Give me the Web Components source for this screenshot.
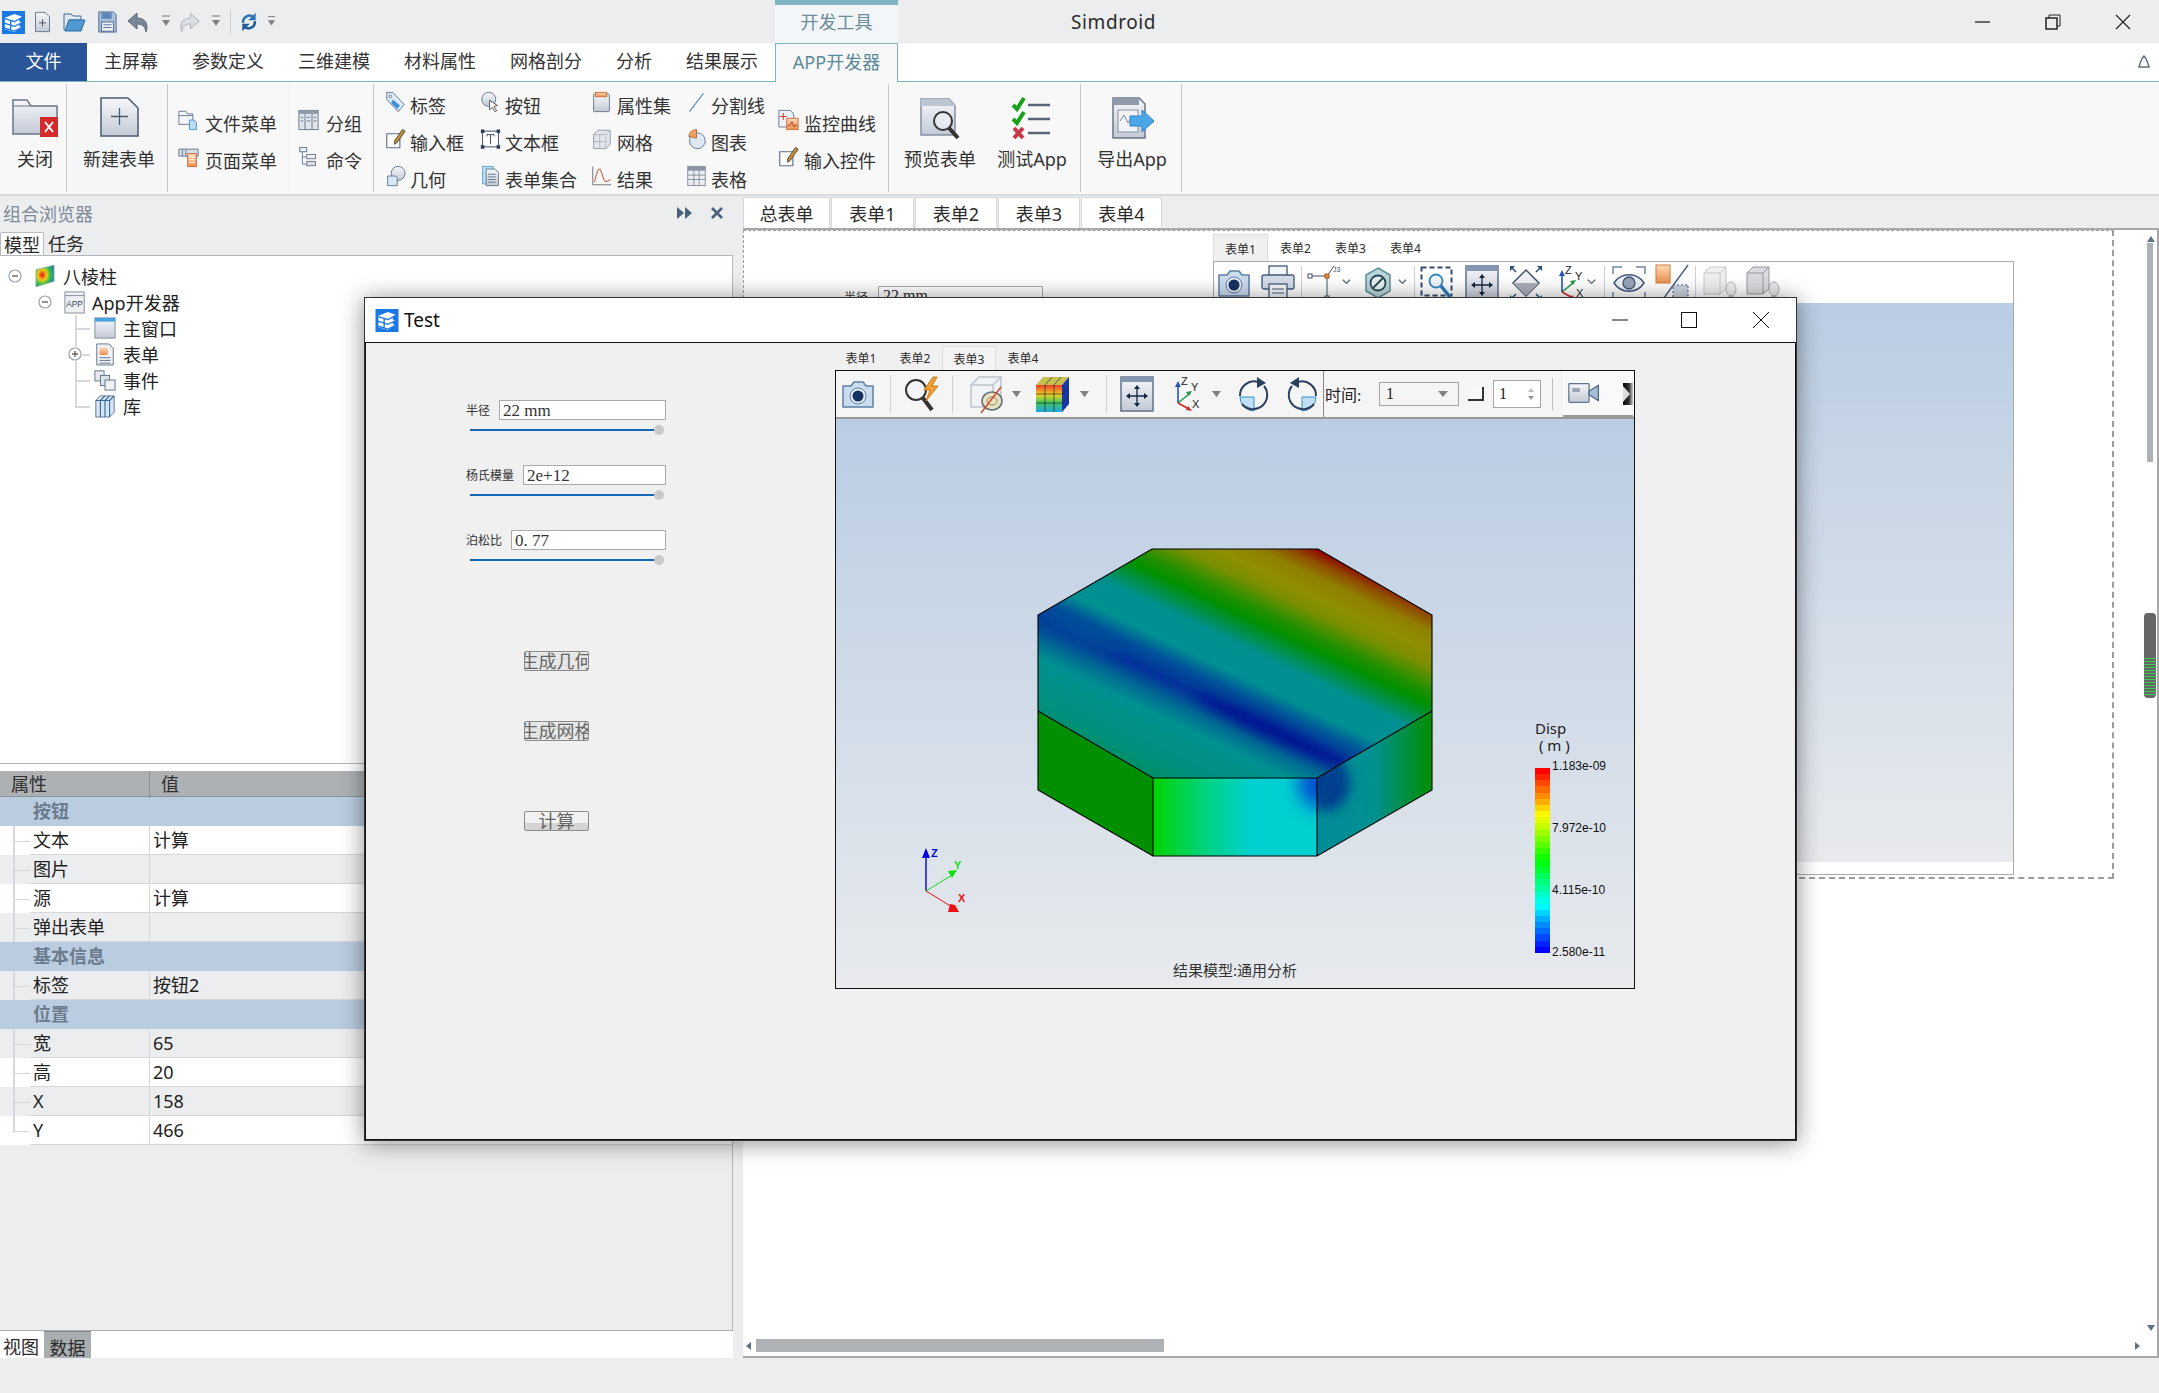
<!doctype html>
<html>
<head>
<meta charset="utf-8">
<title>Simdroid</title>
<style>
  html, body { margin: 0; background: #ecedef; overflow: hidden; }
  body { font-family: "Noto Sans", "Noto Sans CJK SC", sans-serif; font-size: 18px; color: #2b2b2b; }
</style>
</head>
<body>
<sim-app>
  <sim-titlebar>Simdroid</sim-titlebar>

  <ribbon-tabs>
    <rb-tab w="87" kind="file">文件</rb-tab>
    <rb-tab w="88">主屏幕</rb-tab>
    <rb-tab w="106">参数定义</rb-tab>
    <rb-tab w="106">三维建模</rb-tab>
    <rb-tab w="106">材料属性</rb-tab>
    <rb-tab w="106">网格剖分</rb-tab>
    <rb-tab w="70">分析</rb-tab>
    <rb-tab w="106">结果展示</rb-tab>
    <rb-tab w="123" kind="active">APP开发器</rb-tab>
  </ribbon-tabs>

  <sim-ribbon>
    <rb-group w="67"><rb-big icon="closeform" w="70" iw="46" ih="40">关闭</rb-big></rb-group>
    <rb-group w="101" pad="4"><rb-big icon="newform" w="96" iw="41" ih="40" shade="1">新建表单</rb-big></rb-group>
    <rb-group w="122" pad="10" soft="1">
      <rb-stack>
        <rb-small icon="filemenu" iw="27">文件菜单</rb-small>
        <rb-small icon="pagemenu" iw="27">页面菜单</rb-small>
      </rb-stack>
    </rb-group>
    <rb-group w="84" pad="8">
      <rb-stack>
        <rb-small icon="group" iw="28">分组</rb-small>
        <rb-small icon="cmd" iw="28">命令</rb-small>
      </rb-stack>
    </rb-group>
    <rb-group w="515" pad="11">
      <rb-grid>
        <rb-small icon="tag">标签</rb-small>
        <rb-small icon="click">按钮</rb-small>
        <rb-small icon="prop" iw="26">属性集</rb-small>
        <rb-small icon="line">分割线</rb-small>
        <rb-small icon="input">输入框</rb-small>
        <rb-small icon="textbox">文本框</rb-small>
        <rb-small icon="grid3d" iw="26">网格</rb-small>
        <rb-small icon="pie">图表</rb-small>
        <rb-small icon="geo">几何</rb-small>
        <rb-small icon="formset">表单集合</rb-small>
        <rb-small icon="curve" iw="26">结果</rb-small>
        <rb-small icon="table">表格</rb-small>
      </rb-grid>
      <rb-stack>
        <rb-small icon="monitor" iw="26">监控曲线</rb-small>
        <rb-small icon="input" iw="26">输入控件</rb-small>
      </rb-stack>
    </rb-group>
    <rb-group w="192">
      <rb-big icon="preview" w="102" iw="44" ih="42">预览表单</rb-big>
      <rb-big icon="test" w="82" iw="44" ih="42">测试App</rb-big>
    </rb-group>
    <rb-group w="101"><rb-big icon="export" w="102" iw="44" ih="42">导出App</rb-big></rb-group>
  </sim-ribbon>

  <sim-main>
    <side-panel slot="left">
      <tree-row slot="tree" indent="0" toggle="minus" icon="rainbow">八棱柱</tree-row>
      <tree-row slot="tree" indent="1" toggle="minus" icon="app">App开发器</tree-row>
      <tree-row slot="tree" indent="2" guide="mid" icon="window">主窗口</tree-row>
      <tree-row slot="tree" indent="2" guide="plus" toggle="plus" icon="form">表单</tree-row>
      <tree-row slot="tree" indent="2" guide="mid" icon="events">事件</tree-row>
      <tree-row slot="tree" indent="2" guide="end" icon="lib">库</tree-row>

      <prop-table slot="props">
        <prop-row kind="group">按钮</prop-row>
        <prop-row value="计算">文本</prop-row>
        <prop-row alt="1">图片</prop-row>
        <prop-row value="计算">源</prop-row>
        <prop-row alt="1" last="1">弹出表单</prop-row>
        <prop-row kind="group">基本信息</prop-row>
        <prop-row alt="1" value="按钮2" last="1" first="1">标签</prop-row>
        <prop-row kind="group">位置</prop-row>
        <prop-row alt="1" value="65">宽</prop-row>
        <prop-row value="20">高</prop-row>
        <prop-row alt="1" value="158">X</prop-row>
        <prop-row value="466" last="end">Y</prop-row>
      </prop-table>
    </side-panel>

    <form-area slot="right">
      <design-canvas>
        <tb-btn slot="tools" icon="camera" w="40" iw="34" ih="30"></tb-btn>
        <tb-btn slot="tools" icon="printer" w="47" iw="34" ih="36"></tb-btn>
        <tb-sep slot="tools" w="1"></tb-sep>
        <tb-btn slot="tools" icon="geomline" ml="5" w="32" iw="32" ih="38"></tb-btn>
        <tb-drop slot="tools" ml="2" kind="chev"></tb-drop>
        <tb-btn slot="tools" icon="hex" ml="10" w="32" iw="28" ih="32"></tb-btn>
        <tb-drop slot="tools" ml="3" kind="chev"></tb-drop>
        <tb-sep slot="tools" ml="6" w="1"></tb-sep>
        <tb-btn slot="tools" icon="dashmag" ml="4" w="36" iw="34" ih="34"></tb-btn>
        <tb-btn slot="tools" icon="pan" ml="8" w="38" iw="34" ih="36"></tb-btn>
        <tb-btn slot="tools" icon="diamond" ml="7" w="36" iw="34" ih="36"></tb-btn>
        <tb-btn slot="tools" icon="axes" ml="11" w="30" iw="30" ih="36"></tb-btn>
        <tb-drop slot="tools" ml="1" kind="chev"></tb-drop>
        <tb-sep slot="tools" ml="7" w="1"></tb-sep>
        <tb-btn slot="tools" icon="eye" ml="6" w="36" iw="34" ih="34"></tb-btn>
        <tb-btn slot="tools" icon="split" ml="7" w="36" iw="34" ih="38"></tb-btn>
        <tb-sep slot="tools" ml="5" w="1"></tb-sep>
        <tb-btn slot="tools" icon="cubebulb" ml="6" w="36" iw="34" ih="36"></tb-btn>
        <tb-btn slot="tools" icon="cubebulb2" ml="7" w="36" iw="34" ih="36"></tb-btn>
      </design-canvas>
    </form-area>
  </sim-main>

  <sim-status></sim-status>

  <test-window>
    <form-field label="半径" value="22&nbsp;mm"></form-field>
    <form-field label="杨氏模量" value="2e+12"></form-field>
    <form-field label="泊松比" value="0.&nbsp;77"></form-field>
    <form-button top="56">生成几何</form-button>
    <form-button top="50">生成网格</form-button>
    <form-button top="70" plain="1">计算</form-button>

    <viewer-3d slot="viewer">
      <tb-btn slot="tools" icon="camera" w="44" iw="34" ih="30"></tb-btn>
      <tb-sep slot="tools" ml="10" w="1" mr="10"></tb-sep>
      <tb-btn slot="tools" icon="boltmag" w="41" iw="38" ih="36"></tb-btn>
      <tb-sep slot="tools" ml="10" w="1" mr="10"></tb-sep>
      <tb-btn slot="tools" icon="cubeclip" w="48" iw="36" ih="38"></tb-btn>
      <tb-drop slot="tools"></tb-drop>
      <tb-btn slot="tools" icon="colorcube" ml="8" w="44" iw="34" ih="36"></tb-btn>
      <tb-drop slot="tools" ml="5"></tb-drop>
      <tb-sep slot="tools" ml="16" w="1" mr="9"></tb-sep>
      <tb-btn slot="tools" icon="pan" ml="6" w="30" iw="34" ih="36"></tb-btn>
      <tb-btn slot="tools" icon="axes" ml="14" w="40" iw="30" ih="36"></tb-btn>
      <tb-drop slot="tools" ml="5"></tb-drop>
      <tb-btn slot="tools" icon="rotcw" ml="10" w="44" iw="34" ih="36"></tb-btn>
      <tb-btn slot="tools" icon="rotccw" ml="5" w="42" iw="34" ih="36"></tb-btn>
      <time-controls slot="tools"></time-controls>
    </viewer-3d>
  </test-window>
</sim-app>

<script>
// outline colours shared by the ribbon icons
const OL = '#5d6f88';
const DEFS = `<defs>
  <linearGradient id="g" x1="0" y1="0" x2="0" y2="1"><stop offset="0" stop-color="#f6f7fa"/><stop offset="1" stop-color="#c3cad6"/></linearGradient>
  <linearGradient id="o" x1="0" y1="0" x2="0" y2="1"><stop offset="0" stop-color="#fbd9b5"/><stop offset="1" stop-color="#ee8f4e"/></linearGradient>
  <radialGradient id="rb" cx=".35" cy=".45" r=".8"><stop offset="0" stop-color="#e01818"/><stop offset=".3" stop-color="#f4c814"/><stop offset=".55" stop-color="#2fc04a"/><stop offset="1" stop-color="#1858d8"/></radialGradient>
  <linearGradient id="cc" x1="0" y1="0" x2="0" y2="1"><stop offset="0" stop-color="#e83a2a"/><stop offset=".35" stop-color="#f4d020"/><stop offset=".65" stop-color="#40c860"/><stop offset="1" stop-color="#20a8e0"/></linearGradient>
</defs>`;

// name: [viewBox width, viewBox height, markup]
const ICONS = {
  logo: [24, 24, `<rect width="24" height="24" fill="#1a78e6"/><path fill="#fff" d="M3 7 13 3l8 3-3 2v3l3 1-3 2v2l3 1-8 5-10-3v-5l2-1-2-1v-5z"/><path fill="none" stroke="#1a78e6" stroke-width="1.4" d="M3 8l10 3 8-4M3 13l10 3 8-4M3 18l10 3 8-4M9 10v9"/>`],
  new: [24, 24, `<path d="M4 1h11l5 5v17H4z" fill="url(#g)" stroke="${OL}"/><path d="M12 9v8M8 13h8" stroke="#445" fill="none"/>`],
  open: [24, 24, `<path d="M2 4h7l2 2h8v4H7L4 20H2z" fill="#dfe8f2" stroke="#3a6a98"/><path d="M7 10h16l-4 11H3z" fill="#4f9ad6" stroke="#2f6a9c"/>`],
  save: [24, 24, `<path d="M3 1h16l3 3v19H3z" fill="#a9c0dc" stroke="#4d6a90"/><rect x="6" y="1.500" width="11" height="7" fill="#5f88b8"/><rect x="6" y="12" width="13" height="10" fill="#eef2f7" stroke="#4d6a90"/><path d="M8 15h9M8 18h9" stroke="#4d6a90"/>`],
  undo: [24, 24, `<path d="M11 3 2 11l9 8v-5c5 0 8 2 9 8 3-8-1-14-9-14z" fill="#7b8796" stroke="#5c6776"/>`],
  redo: [24, 24, `<path d="M13 3l9 8-9 8v-5c-5 0-8 2-9 8-3-8 1-14 9-14z" fill="#dcdfe4" stroke="#a8aeb7"/>`],
  sync: [24, 24, `<path d="M5 13a7.500 7.500 0 0 1 12-7" fill="none" stroke="#2a73b8" stroke-width="3"/><path d="M20 1v9h-9z" fill="#2a73b8"/><path d="M19 11a7.500 7.500 0 0 1-12 7" fill="none" stroke="#1d5c98" stroke-width="3"/><path d="M4 23v-9h9z" fill="#1d5c98"/>`],
  qdrop: [10, 14, `<path d="M1 1h8" stroke="#777"/><path d="M1 5h8l-4 6z" fill="#808080"/>`],
  tri: [12, 10, `<path d="M1 1h10L6 8z" fill="#808080"/>`],
  chev: [12, 10, `<path d="M2 2l4 4 4-4" fill="none" stroke="#5f6b78" stroke-width="1.400"/>`],

  closeform: [46, 40, `<path d="M1 3h14l4 6h26v28H1z" fill="url(#g)" stroke="#6b7686" stroke-width="1.500"/><path d="M1 9h18" stroke="#6b7686"/><rect x="28" y="20" width="18" height="20" fill="#d42a2a"/><path d="M33 25l8 10M41 25l-8 10" stroke="#fff" stroke-width="2"/>`],
  newform: [41, 40, `<path d="M2 1h27l10 10v28H2z" fill="url(#g)" stroke="#4a5a72" stroke-width="1.500"/><path d="M20.500 11v17M12 19.500h17" stroke="#4a5a72" stroke-width="1.300"/>`],
  filemenu: [24, 24, `<path d="M1 2h8l2 3h6v12H1z" fill="#f4f6f9" stroke="${OL}"/><path d="M1 7h16" stroke="${OL}"/><path d="M13 12h5l3 3v8h-8z" fill="#bcdcf4" stroke="#3f8fcb"/>`],
  pagemenu: [24, 24, `<path d="M1 3h22v8H1z" fill="#d8dde5" stroke="${OL}"/><path d="M5 3v8M9 3v8" stroke="${OL}"/><rect x="11" y="8" width="10" height="15" fill="url(#o)" stroke="#c96a34"/><path d="M13 12h6M13 15h6M13 18h6" stroke="#fff"/>`],
  group: [24, 24, `<rect x="1" y="1" width="22" height="22" fill="#dfe3ea" stroke="${OL}"/><rect x="1" y="1" width="22" height="4" fill="#8f9aaa"/><path d="M8 5v18M16 5v18M3 9h3M3 13h3M10 9h4M10 13h4M18 9h3M18 13h3" stroke="${OL}"/>`],
  cmd: [24, 24, `<path d="M5 5v15h5M5 12h5" fill="none" stroke="${OL}"/><rect x="2" y="1" width="8" height="5" fill="#eef0f4" stroke="${OL}"/><rect x="10" y="9" width="10" height="5" fill="#eef0f4" stroke="${OL}"/><rect x="10" y="17" width="10" height="5" fill="#d9dde4" stroke="${OL}"/>`],
  tag: [24, 24, `<path d="M2 1h7l13 14-7 8L2 9z" fill="#dcebf8" stroke="${OL}"/><path d="M9 9l8 7-3 4-7-7z" fill="#3d8fdc"/><circle cx="6" cy="5.500" r="1.500" fill="#fff" stroke="${OL}"/>`],
  click: [24, 24, `<circle cx="10" cy="9" r="8" fill="url(#g)" stroke="${OL}"/><path d="M11 10l9 6-4 1 3 5-2 1-3-5-3 3z" fill="#fff" stroke="#444"/>`],
  input: [24, 24, `<path d="M2 6h15v16H2z" fill="#fff" stroke="${OL}" stroke-width="1.300"/><path d="M20 1l3 2-9 13-3 2 0-4z" fill="#c98d2e" stroke="#444"/>`],
  textbox: [24, 24, `<rect x="3" y="3" width="18" height="18" fill="#fff" stroke="#2b3a55"/><path d="M1 1h4v4H1zM19 1h4v4h-4zM1 19h4v4H1zM19 19h4v4h-4z" fill="#2b3a55"/><path d="M8 7h8M12 7v11M8 7v2M16 7v2" stroke="#2b3a55" fill="none"/>`],
  geo: [24, 24, `<circle cx="15" cy="9" r="8" fill="url(#g)" stroke="${OL}"/><path d="M3 12h9l2 2v9H3z" fill="#d6e8f6" stroke="${OL}"/>`],
  prop: [24, 24, `<rect x="3" y="3" width="18" height="20" rx="1" fill="url(#g)" stroke="${OL}"/><rect x="5" y="1" width="13" height="5" fill="url(#o)" stroke="#c96a34"/>`],
  line: [24, 24, `<path d="M4 23 20 2" stroke="#4a86c8" stroke-width="1.300"/>`],
  grid3d: [24, 24, `<path d="M3 7 8 2h14v16l-5 5H3z" fill="#e2e6ec" stroke="#8a93a0"/><path d="M3 7h14v16M17 7l5-5M3 15h14M10 7v16" stroke="#aeb5bf" fill="none"/>`],
  pie: [24, 24, `<circle cx="13" cy="14" r="9" fill="#dde8f3" stroke="${OL}"/><path d="M12 11V1A10 10 0 0 0 3 9z" fill="#f0a060" stroke="#b0683a"/>`],
  formset: [24, 24, `<path d="M3 1h12v20H3z" fill="#bfe0f6" stroke="#4e9bd0"/><path d="M7 4h10l4 4v15H7z" fill="url(#g)" stroke="${OL}"/><path d="M9 10h9M9 13h9M9 16h9M9 19h9" stroke="${OL}"/>`],
  curve: [24, 24, `<path d="M2 1v21h21" fill="none" stroke="#667"/><path d="M4 19C8 1 10 1 13 11s5 8 9 5" fill="none" stroke="#d25a44" stroke-width="1.200"/>`],
  table: [24, 24, `<rect x="2" y="1" width="20" height="22" fill="#eceff3" stroke="#7e8896"/><rect x="2" y="1" width="20" height="5" fill="#8b95a5"/><path d="M2 11h20M2 16h20M9 6v17M15 6v17" stroke="#7e8896"/>`],
  monitor: [24, 24, `<path d="M1 1h13l4 4v15H1z" fill="#eef1f6" stroke="${OL}"/><path d="M6 4v8M2 8h8" stroke="#c03a2a" stroke-width="1.100"/><rect x="10" y="10" width="13" height="13" fill="url(#o)" stroke="#c96a34"/><path d="M11 18h3l2-4 2 6 1-2h3" fill="none" stroke="#b0331e"/>`],
  preview: [44, 42, `<path d="M3 2h28l6 7v29H3z" fill="url(#g)" stroke="#8390a3" stroke-width="1.500"/><path d="M3 2h28l6 7H3z" fill="#bcc5d2"/><circle cx="25" cy="24" r="9" fill="#eef1f6" fill-opacity=".7" stroke="#333" stroke-width="2"/><path d="M31 31l9 10" stroke="#333" stroke-width="4"/>`],
  test: [44, 42, `<path d="M3 8l4 4 7-11" fill="none" stroke="#1aa01a" stroke-width="4"/><path d="M3 22l4 4 7-11" fill="none" stroke="#1aa01a" stroke-width="4"/><path d="M4 31l9 10M13 31l-9 10" stroke="#c83a4a" stroke-width="4"/><path d="M18 8h22M18 22h22M18 36h22" stroke="#566578" stroke-width="2.500"/>`],
  export: [44, 42, `<path d="M3 1h26l6 6v34H3z" fill="url(#g)" stroke="#6b7686" stroke-width="1.500"/><path d="M3 1h26v7H3z" fill="#8f9aaa"/><rect x="8" y="13" width="20" height="22" fill="#f2f4f7" stroke="#8390a3"/><path d="M10 24l4-6 4 8 4-6 4 3" fill="none" stroke="#7e8896"/><path d="M20 19h12v-6l12 11-12 11v-6H20z" fill="#4aa8e8" stroke="#2f87c6"/>`],
  rainbow: [24, 24, `<path d="M2 5 22 0v18L2 24z" fill="url(#rb)" stroke="#b8bec8"/>`],
  app: [24, 24, `<rect x="1" y="1" width="21" height="23" fill="#eef0f4" stroke="#7e8896"/><path d="M1 5h21" stroke="#7e8896"/><text x="11.500" y="17" text-anchor="middle" font-size="9" fill="#3c4c66" font-family="Liberation Sans">APP</text>`],
  window: [24, 24, `<rect x="1" y="1" width="22" height="22" fill="url(#g)" stroke="#7e8896"/><rect x="1" y="1" width="22" height="4" fill="#45a4e0"/>`],
  form: [24, 24, `<path d="M3 1h13l5 5v18H3z" fill="#eef1f6" stroke="${OL}"/><rect x="6" y="5" width="9" height="8" fill="url(#o)"/><path d="M6 16h12M6 19h12M6 22h12" stroke="${OL}"/>`],
  events: [24, 24, `<rect x="1" y="2" width="10" height="11" fill="#e6e9ee" stroke="${OL}"/><rect x="7" y="7" width="10" height="11" fill="#dfe3ea" stroke="${OL}"/><rect x="12" y="12" width="11" height="11" fill="#eef0f4" stroke="${OL}"/>`],
  lib: [24, 24, `<path d="M2 6l5-5h15v18l-5 5H2z" fill="#d7e6f5" stroke="${OL}"/><path d="M7 6v18M12 6v18M2 6h15v18M17 6l5-5M12 6l5-5M7 6l5-5" stroke="#33689c" fill="none" stroke-width="1.200"/>`],
  camera: [34, 30, `<path d="M2 7h8l3-4h9l3 4h7v21H2z" fill="#cbdcee" stroke="#5f7fa6" stroke-width="1.500" stroke-linejoin="round"/><circle cx="17" cy="17" r="8" fill="#e8eef5" stroke="#5f7fa6"/><circle cx="17" cy="17" r="5.500" fill="#16315f"/>`],
  printer: [34, 36, `<rect x="8" y="1" width="18" height="10" fill="#f4f6f9" stroke="#41597c" stroke-width="1.300"/><rect x="1" y="10" width="32" height="14" rx="2" fill="#d5dde8" stroke="#41597c" stroke-width="1.300"/><rect x="8" y="19" width="18" height="15" fill="#f4f6f9" stroke="#41597c" stroke-width="1.300"/><path d="M11 24h12M11 28h12" stroke="#41597c"/>`],
  geomline: [32, 38, `<path d="M4 12h16M20 12v22M20 12l7-10" stroke="#44526a" fill="none"/><rect x="1" y="10" width="4" height="4" fill="#fff" stroke="#44526a"/><rect x="18" y="10" width="4" height="4" fill="#e88a3c" stroke="#a65a20"/><rect x="18" y="32" width="4" height="4" fill="#fff" stroke="#44526a"/><text x="26" y="8" font-size="7" fill="#44526a" font-family="Liberation Sans">J3</text>`],
  hex: [28, 32, `<path d="M14 1l12 7v16l-12 7-12-7V8z" fill="#bcd6da" stroke="#5f8f98" stroke-width="1.500"/><circle cx="14" cy="16" r="7.500" fill="#e8f0f2" stroke="#244a58" stroke-width="1.800"/><path d="M9 21 19 11" stroke="#244a58" stroke-width="1.800"/>`],
  dashmag: [34, 34, `<rect x="1.500" y="1.500" width="30" height="28" fill="none" stroke="#3a4a70" stroke-width="2" stroke-dasharray="5 3"/><circle cx="16" cy="15" r="6.500" fill="#f2f6fa" stroke="#3a8cc8" stroke-width="2"/><path d="M21 20l9 11" stroke="#2a78b8" stroke-width="3.500"/>`],
  pan: [34, 36, `<rect x="1" y="1" width="32" height="34" fill="url(#g)" stroke="#60718c" stroke-width="1.500"/><rect x="1" y="1" width="32" height="5" fill="#8496b0"/><path d="M17 11v18M8 20h18" stroke="#12263f" stroke-width="1.300"/><path d="M17 9l-3 4h6zM17 31l-3-4h6zM6 20l4-3v6zM28 20l-4-3v6z" fill="#12263f"/>`],
  diamond: [34, 36, `<path d="M17 5 30 18 17 31 4 18z" fill="#f0f2f5" stroke="#44526a" stroke-width="1.500"/><path d="M4 18h26L17 31z" fill="#a9b0ba"/><path d="M2 2l5 5M32 2l-5 5M2 34l5-5M32 34l-5-5" stroke="#2d4f78" stroke-width="1.500"/><path d="M1 1h5L1 6zM33 1h-5l5 5zM1 35h5l-5-5zM33 35h-5l5-5z" fill="#2d4f78"/>`],
  axes: [30, 36, `<path d="M7 27V9" stroke="#2455b0" stroke-width="1.600"/><path d="M7 5l-3 6h6z" fill="#2455b0"/><path d="M7 27l11-9" stroke="#1f9a4a" stroke-width="1.600"/><path d="M21 15l-6 1 3 4z" fill="#1f9a4a"/><path d="M7 27l11 6" stroke="#d02a2a" stroke-width="1.600"/><path d="M21 35l-6-1 2-4z" fill="#d02a2a"/><text x="10" y="9" font-size="11" fill="#222" font-family="Liberation Sans">Z</text><text x="20" y="15" font-size="11" fill="#222" font-family="Liberation Sans">Y</text><text x="21" y="32" font-size="11" fill="#222" font-family="Liberation Sans">X</text>`],
  eye: [34, 34, `<path d="M1 8V1h9M24 1h9v7M1 26v7h9M24 33h9v-7" fill="none" stroke="#6f86a4" stroke-width="1.500"/><path d="M2 17C9 6 25 6 32 17 25 28 9 28 2 17z" fill="#eef2f6" stroke="#41597c" stroke-width="1.500"/><circle cx="17" cy="17" r="6" fill="#9aa6b6" stroke="#41597c" stroke-width="1.300"/>`],
  split: [34, 38, `<rect x="1" y="1" width="14" height="18" fill="url(#o)" stroke="#d07a3c"/><path d="M33 1 6 38" stroke="#41597c" stroke-width="1.300"/><rect x="18" y="21" width="15" height="15" fill="#ccd4de" stroke="#41597c" stroke-dasharray="2 2"/>`],
  cubebulb: [34, 36, `<path d="M1 8l6-6h16v22l-6 5H1z" fill="#eff0f2" stroke="#c6c9ce"/><path d="M1 8h16v21M17 8l6-6" fill="none" stroke="#c6c9ce"/><ellipse cx="28" cy="24" rx="5" ry="7" fill="#eceeef" stroke="#b0b4ba"/><path d="M26 31h4v4h-4z" fill="#ccc" stroke="#b0b4ba"/>`],
  cubebulb2: [34, 36, `<path d="M1 8l6-6h16v22l-6 5H1z" fill="#d9dbde" stroke="#96999e"/><path d="M1 8h16v21M17 8l6-6" fill="none" stroke="#96999e"/><ellipse cx="28" cy="24" rx="5" ry="7" fill="#e6e8ea" stroke="#a8acb2"/><path d="M26 31h4v4h-4z" fill="#ccc" stroke="#a8acb2"/>`],
  boltmag: [38, 36, `<circle cx="13" cy="14" r="10" fill="#f2f4f7" stroke="#333" stroke-width="2"/><path d="M20 22l9 12" stroke="#333" stroke-width="4"/><path d="M30 1 21 14h6l-4 11 12-15h-6l5-9z" fill="#f0a030" stroke="#c87a18"/>`],
  cubeclip: [36, 38, `<path d="M2 10l8-8h22v22l-8 8H2z" fill="#f0f2f5" stroke="#bcc4d0" stroke-width="1.500"/><path d="M2 10h22v22M24 10l8-8" fill="none" stroke="#bcc4d0" stroke-width="1.500"/><ellipse cx="23" cy="26" rx="10" ry="9" fill="#e8e2c0" stroke="#5f6b78" stroke-width="1.500"/><ellipse cx="23" cy="26" rx="5" ry="4" fill="none" stroke="#8a8a60"/><path d="M12 38 32 12" stroke="#d8482a" stroke-width="1.500"/>`],
  colorcube: [34, 36, `<path d="M8 1h26l-7 8H1z" fill="#c8c050"/><path d="M1 9h26v27H1z" fill="url(#cc)"/><path d="M27 9l7-8v27l-7 8z" fill="#1838a8"/><path d="M1 18h26M1 27h26M10 9v27M19 9v27M10 9l7-8M19 9l7-8M27 18l7-8M27 27l7-8" stroke="#2a2a2a" stroke-width=".7" fill="none"/>`],
  rotcw: [34, 36, `<path d="M17 21H3a14 14 0 0 0 14 14z" fill="#bfe0f6" stroke="#3a8cc8"/><path d="M27 10A14 14 0 1 1 5 28" fill="none" stroke="#29405f" stroke-width="2"/><path d="M3 20A14 14 0 0 1 21 6" fill="none" stroke="#29405f" stroke-width="2"/><path d="M20 1l9 6-9 5z" fill="#29405f"/>`],
  rotccw: [34, 36, `<path d="M17 21h14a14 14 0 0 1-14 14z" fill="#bfe0f6" stroke="#3a8cc8"/><path d="M7 10A14 14 0 1 0 29 28" fill="none" stroke="#29405f" stroke-width="2"/><path d="M31 20A14 14 0 0 0 13 6" fill="none" stroke="#29405f" stroke-width="2"/><path d="M14 1 5 7l9 5z" fill="#29405f"/>`],
  video: [38, 28, `<rect x="1" y="3" width="24" height="22" rx="1" fill="url(#g)" stroke="#5f7590" stroke-width="1.500"/><rect x="5" y="8" width="9" height="5" fill="#9aa6b6"/><path d="M25 12l11-7v18l-11-7z" fill="#a7c0d8" stroke="#4a6584" stroke-width="1.500"/>`],
};

class SimEl extends HTMLElement {
  connectedCallback() {
    if (this.shadowRoot) return;
    this.attachShadow({ mode: 'open' });
    this.shadowRoot.innerHTML = `<style>${this.css()}</style>${this.html()}`;
  }
  attr(name, fallback) {
    const v = this.getAttribute(name);
    return v === null ? fallback : v;
  }
  css() { return ':host{display:block}'; }
  html() { return '<slot></slot>'; }
}

class SimIcon extends SimEl {
  css() { return ':host{display:inline-flex;flex:none} svg{display:block;overflow:visible}'; }
  html() {
    const ic = ICONS[this.attr('name')];
    return `<svg width="${this.attr('w', ic[0])}" height="${this.attr('h', ic[1])}" viewBox="0 0 ${ic[0]} ${ic[1]}">${DEFS}${ic[2]}</svg>`;
  }
}

class SimApp extends SimEl {
  css() {
    return `:host{display:grid;position:relative;width:2159px;height:1393px;overflow:hidden;
      grid-template-rows:43px 39px 114px 1162px 35px;background:#ecedef}`;
  }
}

class SimTitlebar extends SimEl {
  css() {
    return `:host{display:grid;grid-template-columns:775px 123px 1fr auto;background:#ecedef;height:43px}
      .qat{display:flex;align-items:center;padding-left:2px}
      .ctx{background:#f3f6f8;border-top:5px solid #7fb5c2;color:#6d8d99;text-align:center;line-height:34px}
      .title{padding-left:173px;line-height:44px;font-size:19px;letter-spacing:.6px;color:#2a2a2a}
      .win{display:flex;align-items:center;padding-right:26px;gap:50px}
      .div{width:1px;height:24px;background:#c9ccd0;margin-left:9px;margin-right:8px}`;
  }
  html() {
    return `<div class="qat">
        <sim-icon name="logo" w="23" h="23"></sim-icon>
        <sim-icon name="new" style="margin-left:7px" w="21" h="24"></sim-icon>
        <sim-icon name="open" style="margin-left:9px" w="24" h="24"></sim-icon>
        <sim-icon name="save" style="margin-left:10px" w="22" h="24"></sim-icon>
        <sim-icon name="undo" style="margin-left:8px" w="24" h="24"></sim-icon>
        <sim-icon name="qdrop" style="margin-left:11px" w="10" h="14"></sim-icon>
        <sim-icon name="redo" style="margin-left:7px" w="23" h="24"></sim-icon>
        <sim-icon name="qdrop" style="margin-left:10px" w="10" h="14"></sim-icon>
        <span class="div"></span>
        <sim-icon name="sync" w="20" h="24"></sim-icon>
        <sim-icon name="qdrop" style="margin-left:8px" w="9" h="14"></sim-icon>
      </div>
      <div class="ctx">开发工具</div>
      <div class="title"><slot></slot></div>
      <div class="win">
        <svg width="20" height="20" viewBox="0 0 20 20"><path d="M2 10h15" stroke="#222" stroke-width="1.300"/></svg>
        <svg width="20" height="20" viewBox="0 0 20 20"><path d="M3 6h11v11H3z" fill="none" stroke="#222" stroke-width="1.500"/><path d="M6 6V3h11v11h-3" fill="none" stroke="#222"/></svg>
        <svg width="20" height="20" viewBox="0 0 20 20"><path d="M3 3l14 14M17 3 3 17" stroke="#222" stroke-width="1.200"/></svg>
      </div>`;
  }
}

class RibbonTabs extends SimEl {
  css() {
    return `:host{display:flex;position:relative;height:39px;background:#fff;box-sizing:border-box;border-bottom:1px solid #7db4c0}
      .collapse{margin-left:auto;margin-right:9px;align-self:center}`;
  }
  html() {
    return `<slot></slot><svg class="collapse" width="12" height="14" viewBox="0 0 12 14"><path d="M6 1C3 4 2 9 1 12h10C10 9 9 4 6 1z" fill="none" stroke="#66727e" stroke-width="1.500"/></svg>`;
  }
}

class RbTab extends SimEl {
  css() {
    const k = this.attr('kind', '');
    const base = `:host{display:block;width:${this.attr('w')}px;height:38px;line-height:36px;text-align:center;box-sizing:border-box;flex:none;`;
    if (k === 'file') return base + 'background:#2a5599;color:#fff}';
    if (k === 'active') return base + 'height:39px;background:#f8f8f8;color:#5b8a98;border:1px solid #7db4c0;border-bottom:none;position:relative;z-index:1;margin-top:0}';
    return base + 'color:#333}';
  }
}

class SimRibbon extends SimEl {
  css() {
    return ':host{display:flex;height:114px;background:#f8f8f8;box-sizing:border-box;border-bottom:2px solid #d9dadc;padding-bottom:2px}';
  }
}

class RbGroup extends SimEl {
  css() {
    const line = this.attr('soft') ? '#ededed' : '#c4c7ca';
    return `:host{display:flex;flex:none;box-sizing:border-box;width:${this.attr('w')}px;padding-left:${this.attr('pad', 0)}px;
      border-right:1px solid ${line};height:108px;margin-top:2px}`;
  }
}

class RbBig extends SimEl {
  css() {
    const shade = this.attr('shade') ? 'background:#f5f6f8;' : '';
    return `:host{display:flex;flex-direction:column;align-items:center;flex:none;width:${this.attr('w')}px;${shade}padding-top:13px;box-sizing:border-box;color:#333}
      .ic{height:42px}
      .lbl{margin-top:8px;line-height:24px;white-space:nowrap}`;
  }
  html() {
    return `<div class="ic"><sim-icon name="${this.attr('icon')}" w="${this.attr('iw')}" h="${this.attr('ih')}"></sim-icon></div><div class="lbl"><slot></slot></div>`;
  }
}

class RbStack extends SimEl {
  css() { return ':host{display:flex;flex-direction:column;padding-top:20px}'; }
}

class RbGrid extends SimEl {
  css() {
    return `:host{display:grid;grid-template-columns:95px 111px 95px 92px;grid-auto-rows:37px;padding-top:2px}`;
  }
}

class RbSmall extends SimEl {
  css() {
    return `:host{display:flex;align-items:center;height:37px;white-space:nowrap;color:#333}
      .ic{width:${this.attr('iw', 25)}px;flex:none}`;
  }
  html() {
    return `<span class="ic"><sim-icon name="${this.attr('icon')}" w="21" h="22"></sim-icon></span><slot></slot>`;
  }
}

class SimMain extends SimEl {
  css() { return ':host{display:grid;grid-template-columns:743px 1fr;height:1162px}'; }
  html() { return '<slot name="left"></slot><slot name="right"></slot>'; }
}

class SidePanel extends SimEl {
  css() {
    return `:host{display:flex;flex-direction:column;width:743px;height:1162px;background:#ecedef}
      .hd{display:flex;align-items:center;height:36px;box-sizing:border-box;padding-bottom:2px;color:#7d8b9a;padding-left:3px;flex:none}
      .hd svg:first-of-type{margin-left:auto}
      .tabs{display:flex;height:23px;flex:none;margin-right:10px}
      .tab{padding:0 4px;line-height:24px}
      .tab.on{background:#fff;border:1px solid #b8bcc0;border-bottom:none;border-radius:2px 2px 0 0;padding:0 3px}
      .tree{width:733px;box-sizing:border-box;height:509px;background:#fff;border:1px solid #b4b7ba;border-left:none;padding-top:7px;flex:none}
      .gap{width:733px;height:7px;background:#fff;flex:none}
      .pane{width:733px;box-sizing:border-box;flex:1;background:#ecedef;border-right:1px solid #b4b7ba;border-bottom:1px solid #a8acb0}
      .foot{display:flex;width:733px;height:27px;background:#fff;flex:none;box-sizing:border-box;padding-left:3px;line-height:32px;overflow:hidden}
      .foot span{width:38px}
      .foot .sel{background:#a9aeb1;width:47px;text-align:center;margin-left:3px;border-top:1px solid #888}`;
  }
  html() {
    return `<div class="hd">组合浏览器
        <svg width="18" height="16" viewBox="0 0 18 16"><path d="M1 2l7 6-7 6zM9 2l7 6-7 6z" fill="#4a6078"/></svg>
        <svg style="margin-left:16px;margin-right:19px" width="14" height="14" viewBox="0 0 14 14"><path d="M2 2l10 10M12 2 2 12" stroke="#4a6078" stroke-width="2.600"/></svg>
      </div>
      <div class="tabs"><div class="tab on">模型</div><div class="tab">任务</div></div>
      <div class="tree"><slot name="tree"></slot></div>
      <div class="gap"></div>
      <div class="pane"><slot name="props"></slot></div>
      <div class="foot"><span>视图</span><span class="sel">数据</span></div>`;
  }
}

class TreeRow extends SimEl {
  css() {
    const level = +this.attr('indent', 0);
    const g = this.attr('guide');
    const x = [34, 64, 94][level];
    let guides = '';
    if (g) {
      const h = g === 'end' ? '50%' : '100%';
      guides = `.v{position:absolute;left:75px;top:0;height:${h};width:2px;background:#d5d8dc}
        .h{position:absolute;left:75px;top:50%;width:15px;height:2px;background:#d5d8dc}`;
    }
    return `:host{display:flex;position:relative;align-items:center;height:26px;padding-left:${x}px;white-space:nowrap;color:#222}
      .tg{position:absolute;left:${x - 26}px;top:6px;background:#fff}
      .ic{width:${level === 2 ? 29 : level === 1 ? 28 : 29}px;display:flex;flex:none}
      ${guides}`;
  }
  html() {
    const g = this.attr('guide');
    const t = this.attr('toggle');
    const isPlus = t === 'plus';
    const toggle = t ? `<svg class="tg" style="${isPlus ? 'left:68px' : ''}" width="14" height="14" viewBox="0 0 14 14"><circle cx="7" cy="7" r="6" fill="#fff" stroke="#9aa2ac" stroke-width="1.200"/><path d="M4 7h6${isPlus ? 'M7 4v6' : ''}" stroke="#666" stroke-width="1.400"/></svg>` : '';
    const guides = g ? '<span class="v"></span><span class="h"></span>' : '';
    return `${guides}${toggle}<span class="ic"><sim-icon name="${this.attr('icon')}" w="22" h="24"></sim-icon></span><slot></slot>`;
  }
}

class PropTable extends SimEl {
  css() {
    return `:host{display:block;background:#ecedef}
      .hd{display:grid;grid-template-columns:149px 1fr;height:25px;line-height:27px;background:#adb1b4;border-bottom:1px solid #8f9396;color:#2f2f2f}
      .hd div{padding-left:11px}
      .hd div+div{border-left:1px solid #8f9396;padding-left:11px}`;
  }
  html() {
    return `<div class="hd"><div>属性</div><div>值</div></div><slot></slot>`;
  }
}

class PropRow extends SimEl {
  css() {
    if (this.attr('kind') === 'group') {
      return `:host{display:block;height:29px;box-sizing:border-box;background:#bacde0;padding-left:33px;line-height:28px;font-weight:bold;color:#6c7b8e}`;
    }
    const bg = this.attr('alt') ? '#ecedef' : '#fff';
    const end = this.attr('last') === 'end';
    return `:host{display:grid;position:relative;grid-template-columns:119px 1fr;height:29px;box-sizing:border-box;background:${bg};padding-left:30px;line-height:28px;color:#222}
      .c{border-bottom:1px solid #d5d7da;padding-left:3px;height:29px;box-sizing:border-box}
      .c+.c{border-left:1px solid #d5d7da;padding-left:3px}
      .v{position:absolute;left:13px;top:0;width:2px;height:${end ? '50%' : '100%'};background:#d5d8dc}
      .h{position:absolute;left:13px;top:50%;width:17px;height:1px;background:#d5d8dc}`;
  }
  html() {
    if (this.attr('kind') === 'group') return '<slot></slot>';
    return `<span class="v"></span><span class="h"></span><div class="c"><slot></slot></div><div class="c">${this.attr('value', '')}</div>`;
  }
}

class FormArea extends SimEl {
  css() {
    return `:host{display:flex;flex-direction:column;height:1162px}
      .tabs{display:flex;height:32px;padding-top:1px;box-sizing:border-box;flex:none}
      .t{height:31px;line-height:32px;text-align:center;background:#fff;border:1px solid #d5d7da;border-bottom:none;box-sizing:border-box;margin-right:1px}
      .t.on{height:32px;width:87px;margin-right:1px}`;
  }
  html() {
    return `<div class="tabs"><div class="t on">总表单</div><div class="t" style="width:83px">表单1</div><div class="t" style="width:82px">表单2</div><div class="t" style="width:82px">表单3</div><div class="t" style="width:81px">表单4</div></div><slot></slot>`;
  }
}

class DesignCanvas extends SimEl {
  css() {
    return `:host{display:block;position:relative;flex:1;background:#fff;border-top:2px solid #a8a8a8;border-bottom:2px solid #a8a8a8;border-right:2px solid #a8a8a8;overflow:hidden}
      .frame{width:1371px;height:649px;box-sizing:border-box;border:2px dashed #9c9c9c;border-top-width:1px;border-left:1px dashed #9c9c9c}
      .tb{position:absolute;left:470px;top:4px;display:flex;font-size:12px;line-height:29px}
      .tb div{width:55px;text-align:center;height:27px;box-sizing:border-box}
      .tb .on{background:#f0f0f0;border:1px solid #ddd;border-bottom:none}
      .form{position:absolute;left:470px;top:31px;width:801px;height:614px;box-sizing:border-box;border:1px solid #aaa;display:flex;flex-direction:column;background:#fff}
      .tools{display:flex;align-items:center;height:41px;flex:none;overflow:hidden}
      .view{height:559px;flex:none;background:linear-gradient(#bacde3,#e8eaed)}
      .lbl{position:absolute;left:101px;top:58px;font-size:12px;color:#333}
      .inp{position:absolute;left:135px;top:56px;width:165px;height:18px;box-sizing:border-box;border:1px solid #aaa;font:16px/17px "Liberation Serif",serif;padding-left:4px;white-space:nowrap}
      .up{position:absolute;left:1404px;top:6px;width:0;height:0;border:4px solid transparent;border-bottom:6px solid #5f7384;border-top:none}
      .vs{position:absolute;left:1404px;top:13px;width:6px;height:219px;background:#aeb2b5}
      .dn{position:absolute;left:1404px;top:1095px;width:0;height:0;border:4px solid transparent;border-top:6px solid #5f7384;border-bottom:none}
      .pill{position:absolute;left:1401px;top:383px;width:12px;height:85px;border-radius:4px;background:repeating-linear-gradient(#35d050 0 1px,#666 1px 3px) 0 45px/100% 38px no-repeat,#666}
      .hs{position:absolute;left:13px;top:1109px;width:408px;height:13px;background:#aeb2b5}
      .la{position:absolute;left:3px;top:1112px;width:0;height:0;border:4px solid transparent;border-right:5px solid #5f7384;border-left:none}
      .ra{position:absolute;left:1392px;top:1112px;width:0;height:0;border:4px solid transparent;border-left:5px solid #5f7384;border-right:none}`;
  }
  html() {
    return `<div class="frame"></div>
      <div class="lbl">半径</div><div class="inp">22 mm</div>
      <div class="tb"><div class="on">表单1</div><div>表单2</div><div>表单3</div><div>表单4</div></div>
      <div class="form"><div class="tools"><slot name="tools"></slot></div><div class="view"></div></div>
      <span class="up"></span><span class="vs"></span><span class="pill"></span><span class="dn"></span>
      <span class="la"></span><span class="hs"></span><span class="ra"></span>`;
  }
}

class TbBtn extends SimEl {
  css() {
    return `:host{display:flex;align-items:center;justify-content:center;flex:none;width:${this.attr('w')}px;margin-left:${this.attr('ml', 0)}px}`;
  }
  html() {
    return `<sim-icon name="${this.attr('icon')}" w="${this.attr('iw')}" h="${this.attr('ih')}"></sim-icon>`;
  }
}

class TbSep extends SimEl {
  css() {
    return `:host{display:block;flex:none;width:${this.attr('w', 1)}px;align-self:stretch;margin:4px ${this.attr('mr', 0)}px 4px ${this.attr('ml', 0)}px;background:#cfd2d6}`;
  }
}

class TbDrop extends SimEl {
  css() { return `:host{display:flex;flex:none;width:11px;margin-left:${this.attr('ml', 0)}px}`; }
  html() {
    return `<sim-icon name="${this.attr('kind', 'tri')}" w="11" h="9"></sim-icon>`;
  }
}

class TimeControls extends SimEl {
  css() {
    return `:host{display:flex;align-items:center;align-self:stretch;border-left:1px solid #888;flex:none;font:16px "Liberation Serif","Noto Sans CJK SC",serif;color:#222;padding-left:1px;box-sizing:border-box}
      .lb{width:45px;white-space:nowrap}
      .combo{display:flex;align-items:center;justify-content:space-between;box-sizing:border-box;margin-left:9px;width:80px;height:24px;border:1px solid #a5a5a5;padding:0 10px 0 6px;background:#f5f5f5}
      .combo i{width:0;height:0;border:5px solid transparent;border-top:6px solid #808080;border-bottom:none}
      .chk{margin-left:9px;width:16px;height:14px;box-sizing:border-box;border-right:2px solid #333;border-bottom:2px solid #333;background:#f8f8f8}
      .spin{display:flex;align-items:center;justify-content:space-between;box-sizing:border-box;margin-left:9px;width:48px;height:28px;border:1px solid #a5a5a5;background:#fff;padding:0 6px 0 5px}
      .arr{display:flex;flex-direction:column;gap:4px}
      .arr i{display:block;width:0;height:0;border:3px solid transparent}
      .arr i:first-child{border-bottom:4px solid #bbb;border-top:none}
      .arr i:last-child{border-top:4px solid #999;border-bottom:none}
      .sep{width:1px;height:32px;background:#bbb;margin:0 10px 0 11px}
      .vid{position:relative;display:flex;align-items:center;width:70px;height:46px;box-sizing:border-box;background:#f9f9f9;border-bottom:2px solid #999;padding-left:5px;overflow:hidden}
      .more{position:absolute;right:0;top:12px;width:10px;height:22px;background:linear-gradient(90deg,#000,#333 60%,#ccc)}
      .more:after{content:"";position:absolute;left:0;top:3px;border:8px solid transparent;border-left:7px solid #ddd;border-right:none}`;
  }
  html() {
    return `<div class="lb">时间:</div>
      <div class="combo">1<i></i></div>
      <div class="chk"></div>
      <div class="spin">1<div class="arr"><i></i><i></i></div></div>
      <div class="sep"></div>
      <div class="vid"><sim-icon name="video" w="32" h="24"></sim-icon><span class="more"></span></div>`;
  }
}

class TestWindow extends SimEl {
  css() {
    return `:host{display:block;position:absolute;left:364px;top:297px;width:1433px;height:844px;background:#fff;box-shadow:0 2px 22px rgba(0,0,0,.45);box-sizing:border-box;border:1px solid #333}
      .bar{display:flex;align-items:center;height:44px;padding-left:10px;box-sizing:border-box}
      .tt{margin-left:5px;font-size:19px;color:#111}
      .ctl{margin-left:auto;display:flex;align-items:center;gap:53px;padding-right:27px}
      .ctl svg:last-child{margin-left:3px}
      .client{display:flex;height:798px;box-sizing:border-box;border:1px solid #111;background:#f0f0f0}
      .form{width:469px;flex:none;padding:57px 0 0 100px;box-sizing:border-box}`;
  }
  html() {
    return `<div class="bar"><sim-icon name="logo" w="24" h="23"></sim-icon><span class="tt">Test</span>
        <div class="ctl">
          <svg width="16" height="16" viewBox="0 0 16 16"><path d="M0 8h16" stroke="#111"/></svg>
          <svg width="16" height="16" viewBox="0 0 16 16"><rect x=".5" y=".5" width="15" height="15" fill="none" stroke="#111"/></svg>
          <svg width="16" height="16" viewBox="0 0 16 16"><path d="M0 0l16 16M16 0 0 16" stroke="#111"/></svg>
        </div></div>
      <div class="client"><div class="form"><slot></slot></div><slot name="viewer"></slot></div>`;
  }
}

class FormField extends SimEl {
  css() {
    return `:host{display:block;width:200px;height:65px;position:relative}
      .row{display:flex;align-items:center;height:20px}
      .l{font-size:12px;color:#333;white-space:nowrap;margin-right:9px}
      .i{flex:1;height:20px;box-sizing:border-box;border:1px solid #aaa;background:#fff;font:17px/20px "Liberation Serif",serif;padding-left:3px;color:#333;white-space:nowrap}
      .track{position:absolute;left:4px;top:29px;width:186px;height:2px;background:#1565b8}
      .knob{position:absolute;left:188px;top:25px;width:10px;height:10px;border-radius:50%;background:#c9c9c9}`;
  }
  html() {
    return `<div class="row"><span class="l">${this.attr('label')}</span><div class="i">${this.attr('value')}</div></div><span class="track"></span><span class="knob"></span>`;
  }
}

class FormButton extends SimEl {
  css() {
    const bg = this.attr('plain') ? 'linear-gradient(#f1f1f1 60%,#d4d4d4 60%)' : 'repeating-linear-gradient(#e8e8e8 0 6px,#dcdcdc 6px 7px)';
    return `:host{display:flex;justify-content:center;align-items:center;margin:${this.attr('top')}px 0 0 58px;width:65px;height:20px;box-sizing:border-box;border:1px solid #8a8a8a;border-radius:2px;background:${bg};
      overflow:hidden;white-space:nowrap;font-size:18px;line-height:18px;color:#666}`;
  }
}

class Viewer3d extends SimEl {
  css() {
    return `:host{display:block;flex:none;margin-top:3px;position:relative}
      .tabs{display:flex;height:24px;font-size:12px;line-height:25px;margin-left:-1px}
      .tabs div{width:54px;text-align:center;box-sizing:border-box}
      .tabs .on{background:#f4f4f4;border:1px solid #dcdcdc;border-bottom:none}
      .box{width:800px;height:619px;box-sizing:border-box;border:1px solid #111;display:flex;flex-direction:column;background:#f5f5f5}
      .tools{display:flex;align-items:center;height:48px;flex:none;border-bottom:2px solid #999;box-sizing:border-box}
      .vp{position:relative;flex:1;background:linear-gradient(#bacde3,#e8eaed);color:#222}
      .shape{position:absolute;left:194px;top:122px}
      .triad{position:absolute;left:84px;top:424px}
      .cap{position:absolute;left:337px;bottom:8px;font-size:15px;line-height:20px;color:#333;white-space:nowrap}
      .disp{position:absolute;left:699px;top:301px;font-size:15px;line-height:17px;white-space:pre}
      .bar{position:absolute;left:699px;top:349px;width:15px;height:185px}
      .v{position:absolute;left:716px;font:12px/14px "Liberation Sans",sans-serif;color:#111}`;
  }
  html() {
    let stops = [];
    const n = 30;
    for (let i = 0; i < n; i++) {
      const c = `hsl(${Math.round(240 * i / (n - 1))},100%,50%)`;
      stops.push(`${c} ${(i * 100 / n).toFixed(2)}%`, `${c} ${((i + 1) * 100 / n).toFixed(2)}%`);
    }
    return `<div class="tabs"><div>表单1</div><div>表单2</div><div class="on">表单3</div><div>表单4</div></div>
      <div class="box">
        <div class="tools"><slot name="tools"></slot></div>
        <div class="vp">
          <svg class="shape" width="410" height="320" viewBox="1030 540 410 320">
            <defs>
              <linearGradient id="top" gradientUnits="userSpaceOnUse" x1="925" y1="677" x2="1052" y2="411">
                <stop offset="0" stop-color="#00905a"/><stop offset=".102" stop-color="#009080"/><stop offset=".227" stop-color="#009090"/>
                <stop offset=".284" stop-color="#006a93"/><stop offset=".347" stop-color="#03309a"/><stop offset=".409" stop-color="#00509a"/><stop offset=".466" stop-color="#008f92"/><stop offset=".56" stop-color="#009090"/>
                <stop offset=".655" stop-color="#009000"/><stop offset=".7" stop-color="#249000"/><stop offset=".77" stop-color="#7a8f00"/><stop offset=".82" stop-color="#8f8f00"/><stop offset=".88" stop-color="#8f8000"/><stop offset=".925" stop-color="#8f4f00"/><stop offset=".97" stop-color="#8f0000"/>
              </linearGradient>
              <linearGradient id="front" gradientUnits="userSpaceOnUse" x1="1153" y1="0" x2="1317" y2="0">
                <stop offset="0" stop-color="#00d400"/><stop offset=".3" stop-color="#00d37a"/><stop offset=".6" stop-color="#00d0d0"/><stop offset="1" stop-color="#00d0d0"/>
              </linearGradient>
              <linearGradient id="right" gradientUnits="userSpaceOnUse" x1="1317" y1="0" x2="1432" y2="0">
                <stop offset="0" stop-color="#008c98"/><stop offset=".5" stop-color="#009090"/><stop offset="1" stop-color="#008f00"/>
              </linearGradient>
              <clipPath id="ct"><path d="M1152 548H1318L1432 614V710L1317 777H1153L1038 710V614z"/></clipPath>
              <clipPath id="cf"><path d="M1153 777H1317V855H1153z"/></clipPath>
              <clipPath id="cr"><path d="M1317 777 1432 710V789L1317 855z"/></clipPath>
              <filter id="b4" x="-50%" y="-100%" width="200%" height="300%"><feGaussianBlur stdDeviation="6"/></filter>
              <filter id="b8" x="-50%" y="-50%" width="200%" height="200%"><feGaussianBlur stdDeviation="9"/></filter>
            </defs>
            <path d="M1038 710 1153 777V855L1038 789z" fill="#008f00"/>
            <path d="M1153 777H1317V855H1153z" fill="url(#front)"/>
            <g clip-path="url(#cf)"><ellipse cx="1322" cy="782" rx="24" ry="26" fill="#0050d0" filter="url(#b8)"/></g>
            <path d="M1317 777 1432 710V789L1317 855z" fill="url(#right)"/>
            <g clip-path="url(#cr)"><ellipse cx="1326" cy="782" rx="24" ry="28" fill="#00408f" filter="url(#b4)"/></g>
            <path d="M1152 548H1318L1432 614V710L1317 777H1153L1038 710V614z" fill="url(#top)"/>
            <g clip-path="url(#ct)">
              <ellipse cx="1272" cy="730" rx="85" ry="8" transform="rotate(25 1272 730)" fill="#00008c" opacity=".6" filter="url(#b4)"/>
              <ellipse cx="1075" cy="632" rx="50" ry="9" transform="rotate(24 1075 632)" fill="#00609a" opacity=".45" filter="url(#b4)"/>
            </g>
            <path d="M1152 548H1318L1432 614V789L1317 855H1153L1038 789V614zM1038 710 1153 777H1317L1432 710M1153 777V855M1317 777V855" fill="none" stroke="#000" stroke-width="1.100"/>
          </svg>

          <svg class="triad" width="60" height="70" viewBox="0 0 60 70">
            <path d="M6 48V10" stroke="#0000e0" stroke-width="1.400"/><path d="M6 5 2 15h8z" fill="#0000e0"/>
            <path d="M6 48 32 32" stroke="#10e010"/><path d="M37 27l-9 1 4 7z" fill="#10e010"/>
            <path d="M6 48 32 64" stroke="#f01010"/><path d="M39 69H28l2-8 5 1z" fill="#f01010"/>
            <text x="11" y="14" font-size="11" font-weight="bold" fill="#0000e0" font-family="Liberation Sans">Z</text>
            <text x="34" y="26" font-size="11" font-weight="bold" fill="#10e010" font-family="Liberation Sans">Y</text>
            <text x="38" y="59" font-size="11" font-weight="bold" fill="#f01010" font-family="Liberation Sans">X</text>
          </svg>

          <div class="disp">Disp
 ( m )</div>
          <div class="bar" style="background:linear-gradient(${stops.join(',')})"></div>
          <div class="v" style="top:340px">1.183e-09</div>
          <div class="v" style="top:402px">7.972e-10</div>
          <div class="v" style="top:464px">4.115e-10</div>
          <div class="v" style="top:526px">2.580e-11</div>
          <div class="cap">结果模型:通用分析</div>
        </div>
      </div>`;
  }
}

const plain = (css) => class extends SimEl { css() { return css; } };

customElements.define('sim-icon', SimIcon);
customElements.define('sim-app', SimApp);
customElements.define('sim-titlebar', SimTitlebar);
customElements.define('ribbon-tabs', RibbonTabs);
customElements.define('rb-tab', RbTab);
customElements.define('sim-ribbon', SimRibbon);
customElements.define('rb-group', RbGroup);
customElements.define('rb-big', RbBig);
customElements.define('rb-stack', RbStack);
customElements.define('rb-grid', RbGrid);
customElements.define('rb-small', RbSmall);
customElements.define('sim-main', SimMain);
customElements.define('side-panel', SidePanel);
customElements.define('tree-row', TreeRow);
customElements.define('prop-table', PropTable);
customElements.define('prop-row', PropRow);
customElements.define('form-area', FormArea);
customElements.define('design-canvas', DesignCanvas);
customElements.define('tb-btn', TbBtn);
customElements.define('tb-sep', TbSep);
customElements.define('tb-drop', TbDrop);
customElements.define('time-controls', TimeControls);
customElements.define('test-window', TestWindow);
customElements.define('form-field', FormField);
customElements.define('form-button', FormButton);
customElements.define('viewer-3d', Viewer3d);
customElements.define('sim-status', plain(':host{display:block;background:#ecedef;height:35px}'));
</script>
</body>
</html>
